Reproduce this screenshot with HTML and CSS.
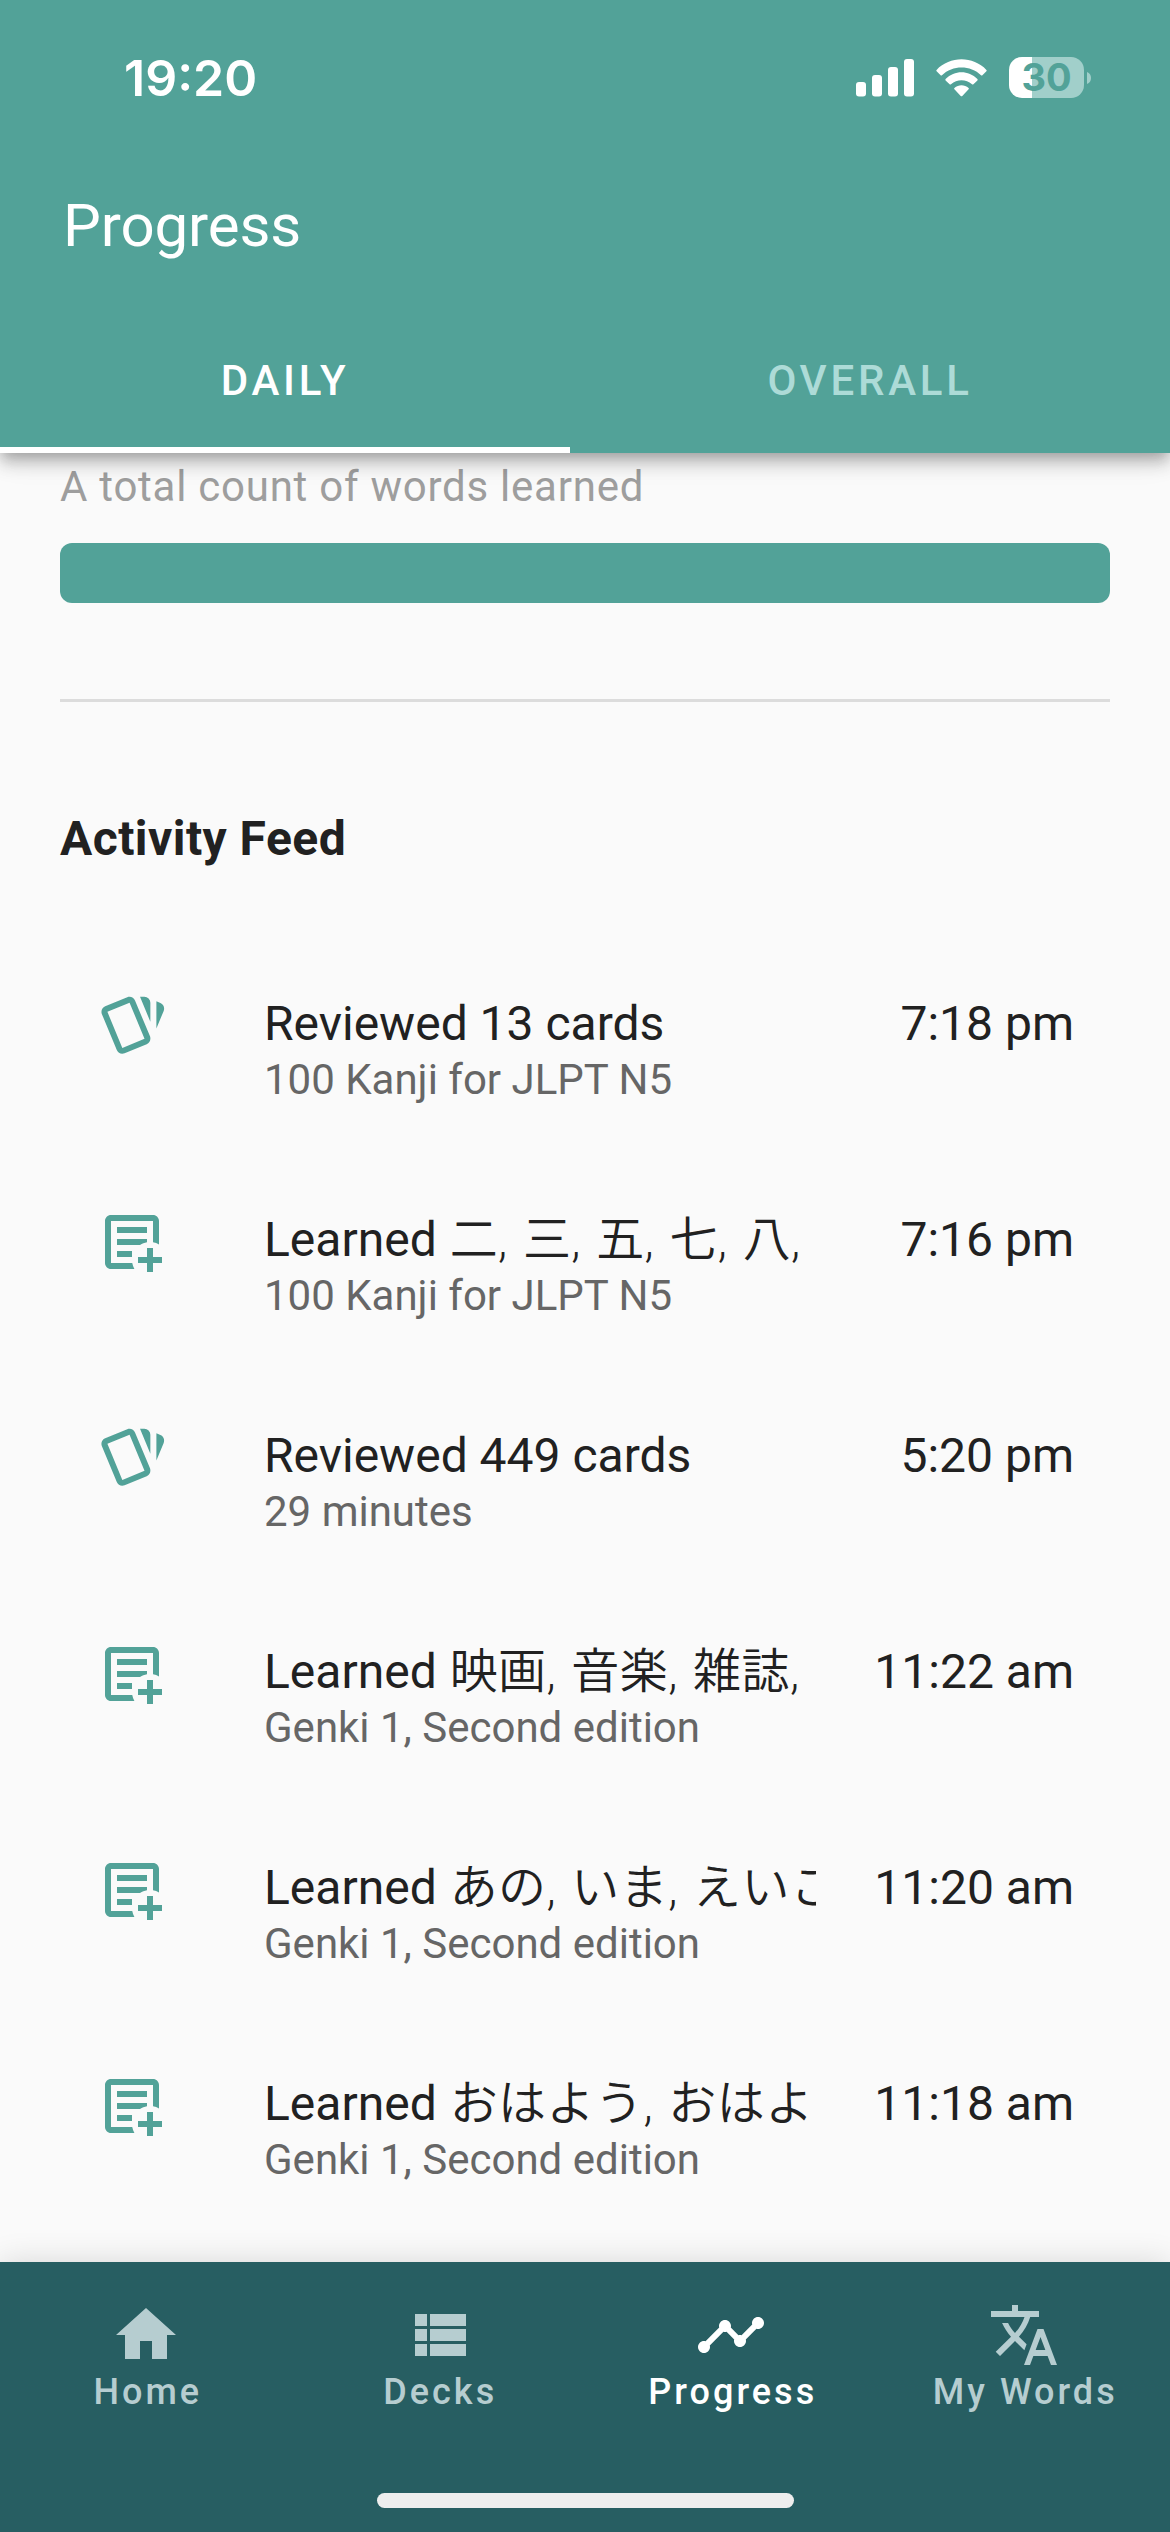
FILE: index.html
```html
<!DOCTYPE html>
<html lang="en">
<head>
<meta charset="utf-8">
<title>Progress</title>
<link rel="stylesheet" href="styles.css">
</head>
<body>
<svg class="sprite" aria-hidden="true">
  <symbol id="cards" viewBox="0 0 24 24"><path d="M11.19,2.25C10.93,2.25 10.67,2.31 10.42,2.4L3.06,5.45C2.04,5.87 1.55,7.04 1.97,8.05L6.93,20C7.24,20.77 7.97,21.23 8.74,21.25C9,21.25 9.27,21.22 9.53,21.1L16.9,18.05C17.65,17.74 18.11,17 18.13,16.25C18.14,16 18.09,15.71 18,15.45L13,3.5C12.71,2.73 11.97,2.26 11.19,2.25M14.67,2.25L18.12,10.6V4.25A2,2 0 0,0 16.12,2.25M20.13,3.79V12.82L22.56,6.96C22.97,5.94 22.5,4.78 21.48,4.35M11.19,4.22L16.17,16.24L8.78,19.3L3.8,7.29"/></symbol>
  <symbol id="learned" viewBox="0 0 24 24"><path d="M17 14H19V17H22V19H19V22H17V19H14V17H17V14M5 3H19C20.11 3 21 3.89 21 5V12.8C20.39 12.45 19.72 12.2 19 12.08V5H5V19H12.08C12.2 19.72 12.45 20.39 12.8 21H5C3.89 21 3 20.11 3 19V5C3 3.89 3.89 3 5 3M7 7H17V9H7V7M7 11H17V12.08C16.15 12.22 15.37 12.54 14.68 13H7V11M7 15H12V17H7V15Z"/></symbol>
</svg>
<div class="screen">
  <header class="app-bar">
    <div class="status">
      <span class="clock">19:20</span>
      <svg class="signal" viewBox="0 0 58 38"><rect y="23" width="10" height="14.500" rx="3"/><rect x="16" y="16" width="10" height="21.500" rx="3"/><rect x="32" y="8" width="10" height="29.500" rx="3"/><rect x="48" y="0" width="10" height="37.500" rx="3"/></svg>
      <svg class="wifi" viewBox="0 0 51 38"><path d="M0.600 10.900C14-3.200 37-3.200 50.400 10.900Q51 11.600 50.400 12.300L46.400 16.200Q45.700 16.900 45 16.200C34.500 5.900 16.500 5.900 6 16.200Q5.300 16.900 4.600 16.200L0.600 12.300Q0 11.600 0.600 10.900Z"/><path d="M9.600 20C18.500 11 32.500 11 41.400 20Q42 20.700 41.400 21.400L37.400 25.200Q36.700 25.900 36 25.200C30 19.800 21 19.800 15 25.200Q14.300 25.900 13.600 25.200L9.600 21.400Q9 20.700 9.600 20Z"/><path d="M18.400 28.900C22.500 25.200 28.500 25.200 32.600 28.900Q33.300 29.600 32.600 30.300L26.300 36.900Q25.500 37.700 24.700 36.900L18.400 30.300Q17.700 29.600 18.400 28.900Z"/></svg>
      <div class="battery"><span class="battery-level">30</span></div>
      <svg class="battery-cap" viewBox="0 0 4 12"><path d="M0 0Q4 1.500 4 6T0 12Z"/></svg>
    </div>
    <h1 class="title">Progress</h1>
    <nav class="tabs">
      <span class="tab active">DAILY</span>
      <span class="tab">OVERALL</span>
    </nav>
  </header>

  <main class="content">
    <p class="caption">A total count of words learned</p>
    <div class="total-bar"></div>
    <hr class="divider">
    <h2 class="heading">Activity Feed</h2>
    <ul class="feed">
      <li class="entry">
        <svg class="entry-icon"><use href="#cards"/></svg>
        <div class="entry-text"><p class="entry-title">Reviewed 13 cards</p><p class="entry-sub">100 Kanji for JLPT N5</p></div>
        <time class="entry-time">7:18 pm</time>
      </li>
      <li class="entry">
        <svg class="entry-icon"><use href="#learned"/></svg>
        <div class="entry-text"><p class="entry-title">Learned <span class="ja" lang="ja">二, 三, 五, 七, 八,</span></p><p class="entry-sub">100 Kanji for JLPT N5</p></div>
        <time class="entry-time">7:16 pm</time>
      </li>
      <li class="entry">
        <svg class="entry-icon"><use href="#cards"/></svg>
        <div class="entry-text"><p class="entry-title">Reviewed 449 cards</p><p class="entry-sub">29 minutes</p></div>
        <time class="entry-time">5:20 pm</time>
      </li>
      <li class="entry">
        <svg class="entry-icon"><use href="#learned"/></svg>
        <div class="entry-text"><p class="entry-title">Learned <span class="ja" lang="ja">映画, 音楽, 雑誌,</span></p><p class="entry-sub">Genki 1, Second edition</p></div>
        <time class="entry-time">11:22 am</time>
      </li>
      <li class="entry">
        <svg class="entry-icon"><use href="#learned"/></svg>
        <div class="entry-text"><p class="entry-title">Learned <span class="ja" lang="ja">あの, いま, えいこ</span></p><p class="entry-sub">Genki 1, Second edition</p></div>
        <time class="entry-time">11:20 am</time>
      </li>
      <li class="entry">
        <svg class="entry-icon"><use href="#learned"/></svg>
        <div class="entry-text"><p class="entry-title">Learned <span class="ja" lang="ja">おはよう, おはよ</span></p><p class="entry-sub">Genki 1, Second edition</p></div>
        <time class="entry-time">11:18 am</time>
      </li>
    </ul>
  </main>

  <footer class="bottom-bar">
    <nav class="nav">
      <a class="nav-item"><svg class="nav-icon" viewBox="0 0 24 24"><path d="M10 20v-6h4v6h5v-8h3L12 3 2 12h3v8z"/></svg><span class="nav-label">Home</span></a>
      <a class="nav-item"><svg class="nav-icon" viewBox="0 0 24 24"><path d="M4 14h4v-4H4v4zm0 5h4v-4H4v4zM4 9h4V5H4v4zm5 5h12v-4H9v4zm0 5h12v-4H9v4zM9 5v4h12V5H9z"/></svg><span class="nav-label">Decks</span></a>
      <a class="nav-item current"><svg class="nav-icon" viewBox="0 0 24 24"><path d="M23 8c0 1.100-.9 2-2 2-.18 0-.35-.02-.51-.07l-3.560 3.550c.05.16.07.34.07.52 0 1.100-.9 2-2 2s-2-.9-2-2c0-.18.02-.36.07-.52l-2.550-2.550c-.16.05-.34.07-.52.07s-.36-.02-.52-.07l-4.550 4.560c.05.16.07.33.07.51 0 1.100-.9 2-2 2s-2-.9-2-2 .9-2 2-2c.18 0 .35.02.51.07l4.560-4.550C8.020 9.360 8 9.180 8 9c0-1.100.9-2 2-2s2 .9 2 2c0 .18-.02.36-.07.52l2.550 2.550c.16-.05.34-.07.52-.07s.36.02.52.07l3.550-3.560C19.020 8.350 19 8.180 19 8c0-1.100.9-2 2-2s2 .9 2 2z"/></svg><span class="nav-label">Progress</span></a>
      <a class="nav-item"><svg class="nav-icon" viewBox="0 0 24 24"><path d="M12.870 15.070l-2.540-2.510.03-.03c1.740-1.940 2.980-4.170 3.710-6.530H17V4h-7V2H8v2H1v1.990h11.170C11.500 7.920 10.440 9.750 9 11.350 8.070 10.320 7.300 9.190 6.690 8h-2c.73 1.630 1.730 3.170 2.980 4.560l-5.090 5.020L4 19l5-5 3.110 3.110.76-2.040zM18.500 10h-2L12 22h2l1.120-3h4.750L21 22h2l-4.500-12zm-2.620 7l1.620-4.330L19.120 17h-3.240z"/></svg><span class="nav-label">My Words</span></a>
    </nav>
    <div class="home-indicator"></div>
  </footer>
</div>
</body>
</html>
```

FILE: styles.css
```css
* { box-sizing: border-box; }

body, h1, h2, p, ul { margin: 0; padding: 0; }

body {
  background: #fafafa;
  font-family: Roboto, "Noto Sans CJK JP", sans-serif;
  color: #212121;
}

svg { display: block; fill: currentColor; flex: none; }

.sprite { display: none; }

.screen {
  display: flex;
  flex-direction: column;
  width: 1170px;
  height: 2532px;
  overflow: hidden;
}

/* App bar */
.app-bar {
  display: flex;
  flex-direction: column;
  flex: none;
  height: 453px;
  background: #52a298;
  color: #fff;
  z-index: 1;
  box-shadow: 0 6px 12px -3px rgba(0, 0, 0, .2),
    0 12px 15px 0 rgba(0, 0, 0, .14),
    0 3px 30px 0 rgba(0, 0, 0, .12);
}

.status {
  display: flex;
  align-items: center;
  height: 155px;
  padding-left: 124px;
}

.clock {
  width: 732px;
  font: 600 50px/60px Inter, sans-serif;
}

.signal { width: 58px; height: 38px; margin-right: 22px; }

.wifi { width: 51px; height: 38px; margin-right: 22px; }

.battery {
  width: 75px;
  height: 41px;
  border-radius: 13px;
  background: linear-gradient(90deg, #fff 23px, #a1cfca 23px);
}

.battery-level {
  display: block;
  font: 700 38px/41px Inter, sans-serif;
  text-align: center;
  color: #52a298;
}

.battery-cap { width: 4px; height: 12px; margin-left: 3px; color: #a1cfca; }

.title {
  height: 154px;
  padding-left: 63px;
  font-weight: 400;
  font-size: 60px;
  line-height: 141px;
  letter-spacing: -0.100px;
}

.tabs { display: flex; height: 144px; }

.tab {
  flex: 0 0 600px;
  padding-top: 47px;
  border-bottom: 6px solid transparent;
  font-weight: 500;
  font-size: 42px;
  line-height: 50px;
  letter-spacing: 3.750px;
  text-align: center;
  color: #addbd7;
}

.tab.active { flex-basis: 570px; border-color: #fff; color: #fff; }

/* Scrolled content */
.content { flex: 1; min-height: 0; padding: 0 60px; }

.caption {
  height: 90px;
  padding-top: 9px;
  font-size: 42px;
  line-height: 50px;
  letter-spacing: 0.750px;
  color: #9e9e9e;
}

.total-bar { height: 60px; border-radius: 12px; background: #52a298; }

.divider { height: 3px; margin: 96px 0 0; border: 0; background: #dcdcdc; }

.heading {
  height: 240px;
  padding-top: 109px;
  font-weight: 700;
  font-size: 48px;
  line-height: 56px;
  letter-spacing: 0.450px;
}

.feed { list-style: none; }

.entry {
  display: flex;
  height: 216px;
  padding: 48px 36px 0;
}

.entry-icon { width: 72px; height: 72px; color: #52a298; }

.entry-text { flex: none; width: 552px; margin-left: 96px; padding-top: 6px; overflow: hidden; }

.entry-title {
  height: 56px;
  font-size: 48px;
  line-height: 56px;
  white-space: nowrap;
}

.ja { margin-left: 1px; font-weight: 350; letter-spacing: 0.450px; word-spacing: 3px; }

.entry-sub {
  font-size: 42px;
  line-height: 56px;
  white-space: nowrap;
  color: #666;
}

.entry-time {
  margin-left: auto;
  padding-top: 6px;
  font-size: 48px;
  line-height: 56px;
  white-space: nowrap;
}

/* Bottom navigation */
.bottom-bar {
  display: flex;
  flex-direction: column;
  justify-content: space-between;
  align-items: center;
  flex: none;
  height: 270px;
  padding-bottom: 24px;
  background: #275e62;
  color: #b6cdd0;
  z-index: 1;
  box-shadow: 0 0 30px rgba(0, 0, 0, .14);
}

.nav { display: flex; width: 100%; }

.nav-item {
  display: flex;
  flex-direction: column;
  align-items: center;
  flex: 1;
  padding-top: 37px;
  font-weight: 500;
  font-size: 36px;
  line-height: 42px;
  letter-spacing: 3px;
}

.nav-label { padding-left: 3px; }

.nav-item.current { color: #fff; }

.nav-icon { width: 72px; height: 72px; }

.home-indicator { width: 417px; height: 15px; border-radius: 8px; background: #eee; }
```
